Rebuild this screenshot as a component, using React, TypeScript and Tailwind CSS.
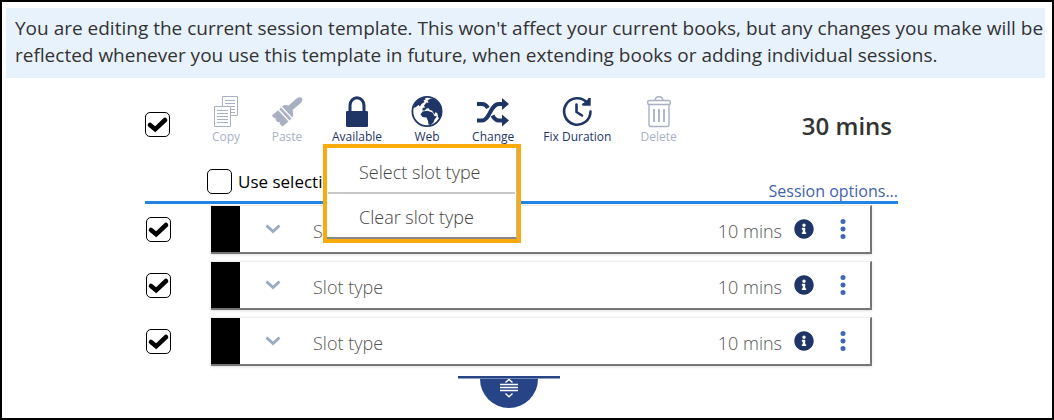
import { useState } from 'react'
import type { ReactNode } from 'react'
import { FaInfoCircle } from 'react-icons/fa'

type Tool = {
  label: string
  icon: ReactNode
  disabled?: boolean
}

const tools: Tool[] = [
  { label: 'Copy', icon: <CopyIcon />, disabled: true },
  { label: 'Paste', icon: <BrushIcon />, disabled: true },
  { label: 'Available', icon: <LockIcon /> },
  { label: 'Web', icon: <GlobeIcon /> },
  { label: 'Change', icon: <ShuffleIcon /> },
  { label: 'Fix Duration', icon: <ClockIcon /> },
  { label: 'Delete', icon: <BinIcon />, disabled: true },
]

const slots = [
  { id: 1, name: 'Slot type', duration: '10 mins' },
  { id: 2, name: 'Slot type', duration: '10 mins' },
  { id: 3, name: 'Slot type', duration: '10 mins' },
]

export default function App() {
  const [selected, setSelected] = useState<number[]>(slots.map((s) => s.id))
  const [useSelection, setUseSelection] = useState(false)
  const [menuOpen, setMenuOpen] = useState(true)

  const allSelected = selected.length === slots.length
  const toggle = (id: number) =>
    setSelected((cur) => (cur.includes(id) ? cur.filter((x) => x !== id) : [...cur, id]))

  return (
    <div className="min-h-screen border-2 border-black bg-white px-1 pt-1.5 font-['Open_Sans','Noto_Sans',sans-serif] text-[#333]">
      <p className="mr-[3px] bg-[#e8f2fd] pt-[7px] pb-[9px] pl-[9px] text-[19px] leading-[27px]">
        You are editing the current session template. This won't affect your current books, but any changes you make will be
        reflected whenever you use this template in future, when extending books or adding individual sessions.
      </p>

      <main className="pr-[150px] pl-[139px]">
        <header className="border-b-3 border-[#2484e6]">
          <div className="flex items-start pt-[18px]">
            <div className="w-[65px] pt-4">
              <CheckBox
                label="Select all slots"
                checked={allSelected}
                onChange={() => setSelected(allSelected ? [] : slots.map((s) => s.id))}
              />
            </div>
            <div className="flex gap-[29px]">
              {tools.map((tool) => (
                <div key={tool.label} className="relative">
                  <button
                    type="button"
                    disabled={tool.disabled}
                    onClick={tool.label === 'Change' ? () => setMenuOpen(!menuOpen) : undefined}
                    className="flex flex-col items-center text-[#1f3566] disabled:text-[#a9b0c4]"
                  >
                    {tool.icon}
                    <span className="text-[12px] leading-[18px] whitespace-nowrap">{tool.label}</span>
                  </button>
                  {tool.label === 'Available' && menuOpen && <SlotMenu />}
                </div>
              ))}
            </div>
            <strong className="mt-3.5 mr-1.5 ml-auto text-[24px] leading-8 font-semibold whitespace-nowrap">30 mins</strong>
          </div>

          <div className="flex items-start justify-between pt-[23px] pl-[62px]">
            <label className="flex items-center gap-1.5 text-[17px] leading-6 text-black">
              <CheckBox label="Use selection" checked={useSelection} onChange={() => setUseSelection(!useSelection)} />
              Use selection
            </label>
            <a href="#options" className="mt-3 text-[16px] leading-5 text-[#3f63ad]">
              Session options...
            </a>
          </div>
        </header>

        <ul className="flex flex-col gap-[7px] pt-px pr-[26px]">
          {slots.map((slot) => (
            <li key={slot.id} className="flex items-center">
              <div className="w-[66px] pl-px">
                <CheckBox label={`Select slot ${slot.id}`} checked={selected.includes(slot.id)} onChange={() => toggle(slot.id)} />
              </div>
              <div className="flex h-[49px] flex-1 items-center border-t border-r-2 border-b-2 border-t-[#eee] border-r-[#777] border-b-[#777] text-[18px] font-light text-[#555] shadow-sm">
                <div className="w-[29px] self-stretch bg-black" />
                <button type="button" aria-label="Expand slot" className="ml-[25px] text-[#9aabc3]">
                  <ChevronIcon />
                </button>
                <span className="ml-8 pt-1">{slot.name}</span>
                <span className="mr-3 ml-auto pt-1">{slot.duration}</span>
                <button type="button" aria-label="Slot information" className="mr-[26px] text-[#1f3566]">
                  <FaInfoCircle size={20} />
                </button>
                <button type="button" aria-label="Slot actions" className="mr-6 text-[#3f67b5]">
                  <DotsIcon />
                </button>
              </div>
            </li>
          ))}
        </ul>

        <div className="mt-2.5 flex justify-center pr-[26px]">
          <button type="button" aria-label="Resize session">
            <ResizeHandle />
          </button>
        </div>
      </main>
    </div>
  )
}

function SlotMenu() {
  return (
    <div className="absolute top-12 -left-[9px] z-10 w-[198px] border-4 border-[#faab0b] bg-white text-[18px] leading-6 font-light text-[#444]">
      <div className="border-r border-b-2 border-r-[#bbb] border-b-[#888]">
        <button type="button" className="block h-11 w-full pt-1 pl-8 text-left">
          Select slot type
        </button>
        <hr className="mx-px border-t-2 border-[#c8c8c8]" />
        <button type="button" className="block h-[43px] w-full pt-0.5 pl-8 text-left">
          Clear slot type
        </button>
      </div>
    </div>
  )
}

function CheckBox({ label, checked, onChange }: { label: string; checked: boolean; onChange: () => void }) {
  return (
    <span className="relative block size-[25px]">
      <input
        type="checkbox"
        aria-label={label}
        checked={checked}
        onChange={onChange}
        className="block size-full appearance-none rounded-[5px] border border-black bg-white"
      />
      {checked && (
        <svg viewBox="0 0 25 25" className="pointer-events-none absolute inset-0 size-full" fill="none" stroke="#000">
          <path d="M5 13 10.200 17.300 20 8" strokeWidth="4.600" strokeLinecap="round" />
        </svg>
      )}
    </span>
  )
}

function CopyIcon() {
  return (
    <svg width="32" height="32" viewBox="0 0 32 32" fill="none" stroke="currentColor">
      <path d="M12.5 10V.5h15v19h-7" />
      <path d="M15 4.500h10M15 7.500h10M21 10.500h4M21 13.500h4M21 16.500h4" />
      <path d="M4.500 10.500h16v20h-16z" />
      <path d="M7 14.500h11M7 17.500h11M7 20.500h11M7 23.500h11M7 26.500h11" />
    </svg>
  )
}

function BrushIcon() {
  return (
    <svg width="32" height="32" viewBox="0 0 32 32" fill="currentColor">
      <path d="M10 11.500 20.500 22.500 18.500 24.500 8.300 13.300z" />
      <path d="M7.200 14.200 17.500 25.500 11.500 30.500 8.500 27.800 9 26 6.800 26.300 4.500 23.800 5 22 3.200 22.200.800 19.500z" />
      <path d="M11 10.500C13.500 8.500 15.500 9 17.300 9.800L25.500 2.500C27.500 1 30 .800 31 2.200S31.200 5.800 29.500 7.300L21.500 14C22.300 16.500 22.800 19 21.300 21.500z" />
    </svg>
  )
}

function LockIcon() {
  return (
    <svg width="32" height="32" viewBox="0 0 32 32" fill="currentColor">
      <rect x="5" y="15" width="22" height="16" rx="1.200" />
      <path d="M9 16V9.500a7 7.800 0 0 1 14 0V16" fill="none" stroke="currentColor" strokeWidth="3" />
    </svg>
  )
}

function GlobeIcon() {
  return (
    <svg width="32" height="32" viewBox="0 0 32 32" fill="currentColor">
      <circle cx="16" cy="15.500" r="14.600" fill="none" stroke="currentColor" strokeWidth="1.800" />
      <path d="M4 7.500 8 3.500 13 1.500 15 3 12.500 4.500 13.500 6 10.500 8 9 10.500 7.500 9 5 11 2.500 12z" />
      <path d="M13 9.500 15.500 6.500 17.500 7 16.500 4.500 19.500 2.500 23 3 28 7 30.500 13 30.500 18 28.500 23 27 21 26.500 17.500 24.500 16 23.500 18.500 21 14.500 18.500 14 18 12.200 15.500 12.500 14 14.500 11.500 14.500 11.500 12 14 11.500z" />
      <path d="M11.500 15.500 16.500 14.800 21.500 16.500 23.500 20 26 20.500 23.500 23.500 22.500 26.500 19.500 29 17.500 28.500 17 25 15.500 21.500 11.500 21 9.500 18.500z" />
    </svg>
  )
}

function ShuffleIcon() {
  return (
    <svg width="32" height="32" viewBox="0 0 32 32" fill="currentColor">
      <g fill="none" stroke="currentColor" strokeWidth="4">
        <path d="M0 24.500H5C13 24.500 13 8 22 8H26" />
        <path d="M0 8H5C8 8 9.500 9.500 11 12M15.500 19.500C17 22.500 19 24.500 22 24.500H26" />
      </g>
      <path d="M25 2 32 8 25 14zM25 18.500 32 24.500 25 30.500z" />
    </svg>
  )
}

function ClockIcon() {
  return (
    <svg width="32" height="32" viewBox="0 0 32 32" fill="none" stroke="currentColor" strokeWidth="2.600">
      <path d="M26 6.500A13.200 13.200 0 1 0 29.500 15.500" strokeLinecap="round" />
      <path d="M15.500 8.500V16L21 19.500" strokeLinecap="round" strokeLinejoin="round" />
      <path d="M28.200 2V9H20.500z" fill="currentColor" stroke="none" />
      <path d="M28.500 2V8.500H21.500" strokeWidth="2.400" />
    </svg>
  )
}

function BinIcon() {
  return (
    <svg width="32" height="32" viewBox="0 0 32 32" fill="none" stroke="currentColor" strokeWidth="1.400">
      <path d="M12 4.500c.5-5 7.500-5 8 0" />
      <rect x="4.700" y="4.500" width="22.600" height="4" rx="1.500" />
      <path d="M6 9v19.500a2 2 0 0 0 2 2h16a2 2 0 0 0 2-2V9" />
      <path d="M11 13v13M16 13v13M21 13v13" strokeWidth="1.800" />
    </svg>
  )
}

function ChevronIcon() {
  return (
    <svg width="16" height="12" viewBox="0 0 16 12" fill="none" stroke="currentColor" strokeWidth="3">
      <path d="M1.500 2.500 8 8.500 14.500 2.500" />
    </svg>
  )
}

function DotsIcon() {
  return (
    <svg width="6" height="20" viewBox="0 0 6 20" fill="currentColor">
      <circle cx="3" cy="2.500" r="2.500" />
      <circle cx="3" cy="10" r="2.500" />
      <circle cx="3" cy="17.500" r="2.500" />
    </svg>
  )
}

function ResizeHandle() {
  return (
    <svg width="102" height="32" viewBox="0 0 102 32">
      <path d="M22 2h58v1a29 29 0 0 1-58 0z" fill="#274486" />
      <path d="M0 0h102v2.500H0z" fill="#274486" />
      <path d="M22 2.500h58" stroke="#6f86b5" />
      <path d="M47.500 6.500 51 3.500l3.500 3M47.500 17.500l3.500 3.200 3.500-3.200" fill="none" stroke="#fff" strokeWidth="1.400" />
      <path d="M42 8.500h18M42 11.500h18M42 14.500h18" stroke="#fff" strokeWidth="1.400" />
    </svg>
  )
}
